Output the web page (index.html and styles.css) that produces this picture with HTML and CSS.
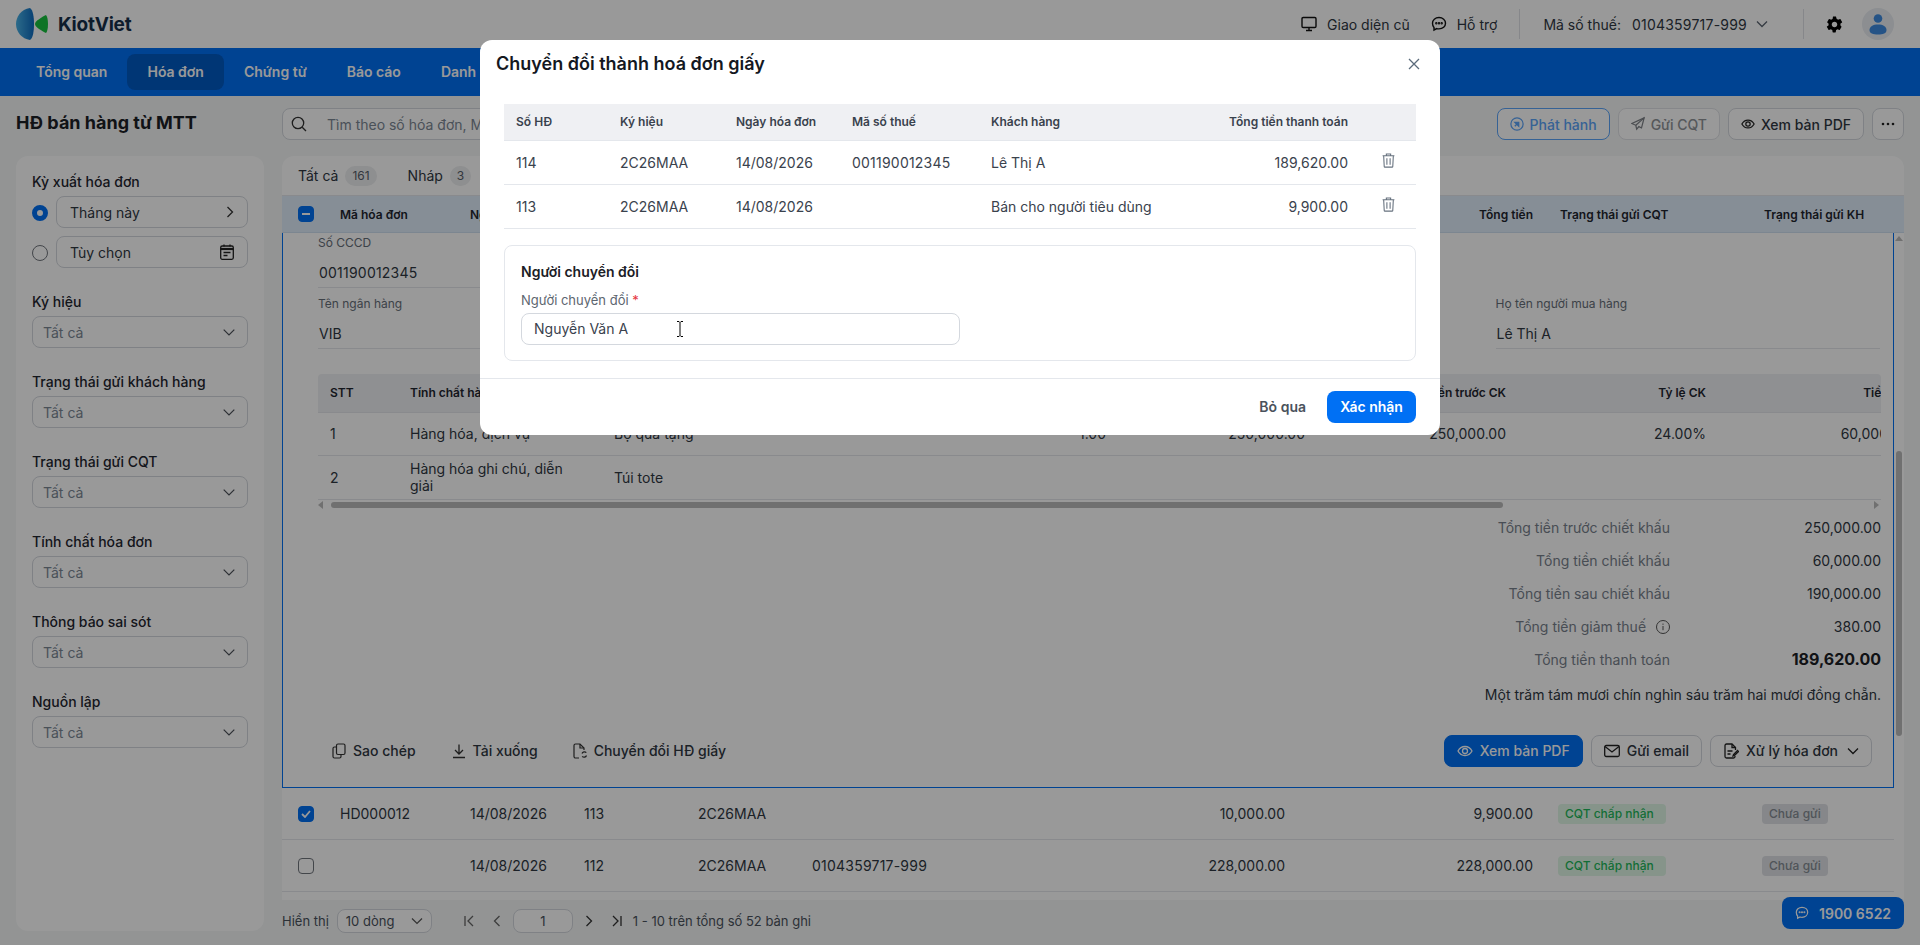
FILE: index.html
```html
<!DOCTYPE html>
<html lang="vi">
<head>
    <meta charset="UTF-8">
    <title>KiotViet - HĐ bán hàng từ MTT</title>
    <link rel="stylesheet" href="styles.css">
</head>
<body>
    <header class="topbar">
        <div class="logo">
            <svg width="32" height="32" viewBox="16 8 32 32">
                <defs>
                    <linearGradient id="lg" x1="0" x2="1" y1="0" y2="0">
                        <stop offset="0" stop-color="#4ab2e6"/>
                        <stop offset="1" stop-color="#0e6cc0"/>
                    </linearGradient>
                </defs>
                <path d="M30 8C21 9 16 17 16 24c0 8 6 15 14 16 3-2 4-9 4-16s-1-14-4-16z" fill="url(#lg)"/>
                <path d="M48 24c0-5-1-8-2-9-4 2-11 6-11 9s7 7 11 9c1-1 2-4 2-9z" fill="#18c23f"/>
            </svg>
            <span class="logo-text">KiotViet</span>
        </div>
        <div class="top-right">
            <a class="top-link">
                <svg class="ic-16" viewBox="0 0 16 16" fill="none" stroke="#111" stroke-width="1.4"><rect x="1" y="1.5" width="14" height="10" rx="1.2"/><path d="M5 14.5h6M8 12v2"/></svg>
                Giao diện cũ
            </a>
            <a class="top-link gap-l">
                <svg class="ic-16" viewBox="0 0 16 16" fill="none" stroke="#111" stroke-width="1.4"><path d="M8 1.5c3.8 0 6.5 2.5 6.5 5.7s-2.7 5.7-6.5 5.7c-.8 0-1.5-.1-2.2-.3L3 14v-2.6C2 10.4 1.5 8.9 1.5 7.2 1.5 4 4.2 1.5 8 1.5z"/><circle cx="5.3" cy="7.2" r=".5"/><circle cx="8" cy="7.2" r=".5"/><circle cx="10.7" cy="7.2" r=".5"/></svg>
                Hỗ trợ
            </a>
            <span class="top-sep sep-a"></span>
            <span class="tax-label">Mã số thuế:</span>
            <span class="tax-value digits">0104359717-999</span>
            <svg class="tax-chev" width="12" height="8" viewBox="0 0 12 8" fill="none" stroke="#5b6470" stroke-width="1.3"><path d="M1 1.5l5 5 5-5"/></svg>
            <span class="top-sep sep-b"></span>
            <svg class="gear" width="19" height="19" viewBox="0 0 24 24" fill="#000"><path d="M19.4 13c.1-.3.1-.7.1-1s0-.7-.1-1l2.1-1.6c.2-.2.2-.4.1-.6l-2-3.5c-.1-.2-.4-.3-.6-.2l-2.5 1c-.5-.4-1.1-.7-1.7-1L14 2.4c0-.2-.2-.4-.5-.4h-3c-.3 0-.5.2-.5.4l-.4 2.7c-.6.2-1.2.6-1.7 1l-2.5-1c-.2-.1-.5 0-.6.2l-2 3.5c-.1.2-.1.4.1.6L4.6 11c0 .3-.1.7-.1 1s0 .7.1 1l-2.1 1.600c-.2.2-.2.4-.1.6l2 3.500c.1.2.4.3.6.2l2.500-1c.5.4 1.100.7 1.700 1l.4 2.700c0 .2.2.4.5.4h3c.3 0 .5-.2.5-.4l.4-2.700c.6-.2 1.200-.6 1.700-1l2.500 1c.2.1.5 0 .6-.2l2-3.500c.1-.2.1-.4-.1-.6L19.400 13zM12 15.500c-1.900 0-3.500-1.600-3.500-3.500s1.600-3.500 3.500-3.500 3.500 1.600 3.500 3.500-1.600 3.500-3.500 3.500z"/></svg>
            <span class="avatar">
                <svg width="20" height="22" viewBox="0 0 20 22" fill="#3f8be0"><circle cx="10" cy="5.500" r="4.300"/><path d="M1.500 17c0-3.500 3.500-5.500 8.500-5.500s8.500 2 8.500 5.500-3.500 4.500-8.500 4.500S1.500 20.500 1.500 17z"/></svg>
            </span>
        </div>
    </header>

    <nav class="navbar">
        <a class="nav-item">Tổng quan</a>
        <a class="nav-item active">Hóa đơn</a>
        <a class="nav-item">Chứng từ</a>
        <a class="nav-item">Báo cáo</a>
        <a class="nav-item">Danh mục</a>
    </nav>

    <main class="page">
        <div class="toolbar">
            <h1 class="page-title">HĐ bán hàng từ MTT</h1>
            <div class="search">
                <svg class="ic-16" viewBox="0 0 16 16" fill="none" stroke="#333" stroke-width="1.3"><circle cx="7" cy="7" r="5.7"/><path d="M11.2 11.2L15 15"/></svg>
                <span>Tìm theo số hóa đơn, Mã hóa đơn, Mã số thuế, Khách hàng</span>
            </div>
            <div class="tool-btns">
                <button class="btn btn-outline-primary">
                    <svg class="ic-14" viewBox="0 0 16 16" fill="none" stroke="#5aa3f8" stroke-width="1.4"><circle cx="8" cy="8" r="7"/><path d="M5.5 6H10v4.500z" fill="#5aa3f8"/><path d="M5.5 10.500L9 7" stroke-width="1.6"/></svg>
                    Phát hành
                </button>
                <button class="btn btn-disabled">
                    <svg class="ic-14" viewBox="0 0 16 16" fill="none" stroke="#7d8187" stroke-width="1.4"><path d="M15 1L1 7.500l4.500 2 1 4.500 2.500-3 3 1.500z"/><path d="M15 1L5.500 9.500"/></svg>
                    Gửi CQT
                </button>
                <button class="btn">
                    <svg class="ic-14" viewBox="0 0 16 16" fill="none" stroke="#222" stroke-width="1.4"><path d="M1 8c1.600-3 4-4.500 7-4.500S13.400 5 15 8c-1.600 3-4 4.500-7 4.500S2.600 11 1 8z"/><circle cx="8" cy="8" r="2.500"/></svg>
                    Xem bản PDF
                </button>
                <button class="btn btn-more">
                    <svg width="14" height="4" viewBox="0 0 14 4" fill="#222"><circle cx="2" cy="2" r="1.3"/><circle cx="7" cy="2" r="1.3"/><circle cx="12" cy="2" r="1.3"/></svg>
                </button>
            </div>
        </div>

        <div class="content">
            <aside class="sidebar">
                <div class="side-title">Kỳ xuất hóa đơn</div>
                <div class="period-row">
                    <span class="radio checked"></span>
                    <div class="field">
                        <span>Tháng này</span>
                        <svg width="8" height="12" viewBox="0 0 8 12" fill="none" stroke="#333" stroke-width="1.3"><path d="M1.500 1l5 5-5 5"/></svg>
                    </div>
                </div>
                <div class="period-row">
                    <span class="radio"></span>
                    <div class="field">
                        <span>Tùy chọn</span>
                        <svg width="14" height="16" viewBox="0 0 14 16" fill="none" stroke="#222" stroke-width="1.3"><rect x=".7" y="2" width="12.6" height="13.3" rx="1.5"/><path d="M.7 5h12.6" stroke-width="2.2"/><path d="M3.500 8.500h7M3.500 11.500h4M4 .5v2M10 .5v2"/></svg>
                    </div>
                </div>
                <div class="side-group">
                    <div class="side-label">Ký hiệu</div>
                    <div class="select"><span>Tất cả</span><svg class="chev" viewBox="0 0 12 7"><path d="M.7.7L6 6l5.3-5.3"/></svg></div>
                </div>
                <div class="side-group">
                    <div class="side-label">Trạng thái gửi khách hàng</div>
                    <div class="select"><span>Tất cả</span><svg class="chev" viewBox="0 0 12 7"><path d="M.7.7L6 6l5.3-5.3"/></svg></div>
                </div>
                <div class="side-group">
                    <div class="side-label">Trạng thái gửi CQT</div>
                    <div class="select"><span>Tất cả</span><svg class="chev" viewBox="0 0 12 7"><path d="M.7.7L6 6l5.3-5.3"/></svg></div>
                </div>
                <div class="side-group">
                    <div class="side-label">Tính chất hóa đơn</div>
                    <div class="select"><span>Tất cả</span><svg class="chev" viewBox="0 0 12 7"><path d="M.7.7L6 6l5.3-5.3"/></svg></div>
                </div>
                <div class="side-group">
                    <div class="side-label">Thông báo sai sót</div>
                    <div class="select"><span>Tất cả</span><svg class="chev" viewBox="0 0 12 7"><path d="M.7.7L6 6l5.3-5.3"/></svg></div>
                </div>
                <div class="side-group">
                    <div class="side-label">Nguồn lập</div>
                    <div class="select"><span>Tất cả</span><svg class="chev" viewBox="0 0 12 7"><path d="M.7.7L6 6l5.3-5.3"/></svg></div>
                </div>
            </aside>

            <section class="right-col">
                <div class="list-card">
                    <div class="tabs">
                        <span class="tab">Tất cả <b class="count">161</b></span>
                        <span class="tab">Nháp <b class="count">3</b></span>
                    </div>
                    <div class="list-row list-head">
                        <span class="cell-check"><span class="check partial"></span></span>
                        <span>Mã hóa đơn</span>
                        <span>Ngày hóa đơn</span>
                        <span>Số HĐ</span>
                        <span>Ký hiệu</span>
                        <span>Mã số thuế</span>
                        <span class="num">Tổng tiền hàng</span>
                        <span class="num">Tổng tiền</span>
                        <span class="cell-cqt">Trạng thái gửi CQT</span>
                        <span>Trạng thái gửi KH</span>
                    </div>
                    <div class="list-body">
                        <div class="list-scroll">
                            <div class="detail">
                                <div class="field-grid">
                                    <div class="info">
                                        <label>Số CCCD</label>
                                        <div class="info-val digits">001190012345</div>
                                    </div>
                                </div>
                                <div class="field-grid second">
                                    <div class="info">
                                        <label>Tên ngân hàng</label>
                                        <div class="info-val">VIB</div>
                                    </div>
                                    <div class="info buyer">
                                        <label>Họ tên người mua hàng</label>
                                        <div class="info-val">Lê Thị A</div>
                                    </div>
                                </div>

                                <div class="items-wrap">
                                    <table class="items">
                                        <colgroup>
                                            <col class="i-stt"><col class="i-kind"><col class="i-name"><col class="i-qty">
                                            <col class="i-price"><col class="i-before"><col class="i-rate"><col class="i-disc">
                                        </colgroup>
                                        <thead>
                                            <tr>
                                                <th>STT</th><th>Tính chất hàng hóa</th><th>Tên hàng hóa</th><th class="num">Số lượng</th>
                                                <th class="num">Đơn giá</th><th class="num">Tiền trước CK</th><th class="num">Tỷ lệ CK</th><th class="num">Tiền CK</th>
                                            </tr>
                                        </thead>
                                        <tbody>
                                            <tr>
                                                <td>1</td><td>Hàng hóa, dịch vụ</td><td>Bộ quà tặng</td><td class="num">1.00</td>
                                                <td class="num">250,000.00</td><td class="num">250,000.00</td><td class="num">24.00%</td><td class="num">60,000.00</td>
                                            </tr>
                                            <tr>
                                                <td>2</td><td>Hàng hóa ghi chú, diễn giải</td><td>Túi tote</td><td></td><td></td><td></td><td></td><td></td>
                                            </tr>
                                        </tbody>
                                    </table>
                                </div>
                                <div class="hbar">
                                    <span class="arrow-l"></span>
                                    <span class="hbar-thumb"></span>
                                    <span class="arrow-r"></span>
                                </div>

                                <div class="sum-row"><span class="sum-label">Tổng tiền trước chiết khấu</span><span class="sum-val">250,000.00</span></div>
                                <div class="sum-row"><span class="sum-label">Tổng tiền chiết khấu</span><span class="sum-val">60,000.00</span></div>
                                <div class="sum-row"><span class="sum-label">Tổng tiền sau chiết khấu</span><span class="sum-val">190,000.00</span></div>
                                <div class="sum-row">
                                    <span class="sum-label">Tổng tiền giảm thuế
                                        <svg class="ic-info" viewBox="0 0 14 14" fill="none" stroke="#555" stroke-width="1"><circle cx="7" cy="7" r="6.5"/><path d="M7 6v4.200M7 3.600v1.200"/></svg>
                                    </span>
                                    <span class="sum-val">380.00</span>
                                </div>
                                <div class="sum-row"><span class="sum-label">Tổng tiền thanh toán</span><span class="sum-val total">189,620.00</span></div>
                                <div class="in-words">Một trăm tám mươi chín nghìn sáu trăm hai mươi đồng chẵn.</div>

                                <div class="actions">
                                    <div class="act-left">
                                        <a class="act-link">
                                            <svg class="ic-14" viewBox="0 0 14 16" fill="none" stroke="#333" stroke-width="1.2"><rect x="4.500" y="1" width="8.500" height="10.500" rx="1.500"/><path d="M4.500 4h-2C1.700 4 1 4.700 1 5.500v8c0 .8.700 1.500 1.500 1.500h5c.8 0 1.500-.7 1.500-1.500v-2"/></svg>
                                            Sao chép
                                        </a>
                                        <a class="act-link">
                                            <svg class="ic-14" viewBox="0 0 14 16" fill="none" stroke="#333" stroke-width="1.3"><path d="M7 1.500v9M3 7l4 4 4-4M1 14.500h12"/></svg>
                                            Tải xuống
                                        </a>
                                        <a class="act-link conv">
                                            <svg class="ic-16" viewBox="0 0 16 16" fill="none" stroke="#333" stroke-width="1.2"><path d="M7 15H3.500C2.700 15 2 14.300 2 13.500v-11C2 1.700 2.700 1 3.500 1H8l4 4v2"/><path d="M8 1v4h4"/><path d="M10 10.500a2.500 2.500 0 0 1 4.300-.8M14.500 12.500a2.500 2.500 0 0 1-4.300.8"/></svg>
                                            Chuyển đổi HĐ giấy
                                        </a>
                                    </div>
                                    <div class="act-right">
                                        <button class="btn btn-primary">
                                            <svg class="ic-16" viewBox="0 0 16 16" fill="none" stroke="#fff" stroke-width="1.3"><path d="M1 8c1.600-3 4-4.500 7-4.500S13.400 5 15 8c-1.600 3-4 4.500-7 4.500S2.600 11 1 8z"/><circle cx="8" cy="8" r="2.500"/></svg>
                                            Xem bản PDF
                                        </button>
                                        <button class="btn">
                                            <svg class="ic-16" viewBox="0 0 16 16" fill="none" stroke="#222" stroke-width="1.3"><rect x=".7" y="2.500" width="14.600" height="11" rx="1.500"/><path d="M1 3.500l7 5.500 7-5.500"/></svg>
                                            Gửi email
                                        </button>
                                        <button class="btn">
                                            <svg class="ic-16" viewBox="0 0 16 16" fill="none" stroke="#222" stroke-width="1.3"><path d="M12.500 7V4.500L9 1H3.500C2.700 1 2 1.700 2 2.500v11c0 .8.700 1.500 1.500 1.500h7c.8 0 1.500-.7 1.500-1.500V13"/><path d="M4.500 8h5M4.500 11h3M9 1v3.500h3.500"/><path d="M15 7l-4.500 4.500-.5 1.500 1.500-.5L16 8"/></svg>
                                            Xử lý hóa đơn
                                            <svg class="btn-chev" width="12" height="8" viewBox="0 0 12 8" fill="none" stroke="#222" stroke-width="1.3"><path d="M1 1.500l5 5 5-5"/></svg>
                                        </button>
                                    </div>
                                </div>
                            </div>

                            <div class="list-row">
                                <span class="cell-check"><span class="check on"><svg width="10" height="8" viewBox="0 0 10 8" fill="none" stroke="#fff" stroke-width="1.8"><path d="M1 4l3 3 5-6"/></svg></span></span>
                                <span>HD000012</span><span>14/08/2026</span><span>113</span><span>2C26MAA</span><span></span>
                                <span class="num">10,000.00</span><span class="num">9,900.00</span>
                                <span class="cell-cqt"><i class="badge green">CQT chấp nhận</i></span><span><i class="badge gray">Chưa gửi</i></span>
                            </div>
                            <div class="list-row">
                                <span class="cell-check"><span class="check"></span></span>
                                <span></span><span>14/08/2026</span><span>112</span><span>2C26MAA</span><span class="digits">0104359717-999</span>
                                <span class="num">228,000.00</span><span class="num">228,000.00</span>
                                <span class="cell-cqt"><i class="badge green">CQT chấp nhận</i></span><span><i class="badge gray">Chưa gửi</i></span>
                            </div>
                        </div>
                        <div class="vbar">
                            <span class="arrow-u"></span>
                            <span class="vbar-thumb"></span>
                        </div>
                    </div>
                </div>

                <div class="pager">
                    <span>Hiển thị</span>
                    <div class="page-size">10 dòng <svg width="12" height="8" viewBox="0 0 12 8" fill="none" stroke="#555" stroke-width="1.2"><path d="M1 1.500l5 5 5-5"/></svg></div>
                    <div class="page-btns">
                        <svg width="12" height="12" viewBox="0 0 12 12" fill="none" stroke="#666" stroke-width="1.3"><path d="M2 1v10M10 1L5 6l5 5"/></svg>
                        <svg width="12" height="12" viewBox="0 0 12 12" fill="none" stroke="#666" stroke-width="1.3"><path d="M8.500 1l-5 5 5 5"/></svg>
                        <span class="page-input">1</span>
                        <svg width="12" height="12" viewBox="0 0 12 12" fill="none" stroke="#333" stroke-width="1.3"><path d="M3.500 1l5 5-5 5"/></svg>
                        <svg width="12" height="12" viewBox="0 0 12 12" fill="none" stroke="#333" stroke-width="1.3"><path d="M2 1l5 5-5 5M10 1v10"/></svg>
                    </div>
                    <span>1 - 10 trên tổng số 52 bản ghi</span>
                </div>
            </section>
        </div>
    </main>

    <div class="overlay">
        <div class="modal">
            <div class="modal-head">
                <h2>Chuyển đổi thành hoá đơn giấy</h2>
                <svg width="12" height="12" viewBox="0 0 12 12" fill="none" stroke="#5b6b7b" stroke-width="1.3"><path d="M1 1l10 10M11 1L1 11"/></svg>
            </div>
            <table class="convert">
                <colgroup>
                    <col class="c-no"><col class="c-sym"><col class="c-date"><col class="c-tax"><col class="c-cust"><col class="c-total"><col class="c-del">
                </colgroup>
                <thead>
                    <tr><th>Số HĐ</th><th>Ký hiệu</th><th>Ngày hóa đơn</th><th>Mã số thuế</th><th>Khách hàng</th><th class="num">Tổng tiền thanh toán</th><th></th></tr>
                </thead>
                <tbody>
                    <tr>
                        <td>114</td><td>2C26MAA</td><td>14/08/2026</td><td class="digits">001190012345</td><td>Lê Thị A</td><td class="num">189,620.00</td>
                        <td class="del"><svg width="13" height="15" viewBox="0 0 12 14" fill="none" stroke="#66717e" stroke-width="1"><path d="M.5 2.500h11M4 2.500V1h4v1.500M1.500 2.500l.5 10c0 .4.300.7.700.7h6.600c.4 0 .7-.3.7-.7l.5-10M4.500 5v6M7.500 5v6"/></svg></td>
                    </tr>
                    <tr>
                        <td>113</td><td>2C26MAA</td><td>14/08/2026</td><td></td><td>Bán cho người tiêu dùng</td><td class="num">9,900.00</td>
                        <td class="del"><svg width="13" height="15" viewBox="0 0 12 14" fill="none" stroke="#66717e" stroke-width="1"><path d="M.5 2.500h11M4 2.500V1h4v1.500M1.500 2.500l.5 10c0 .4.300.7.700.7h6.600c.4 0 .7-.3.7-.7l.5-10M4.500 5v6M7.500 5v6"/></svg></td>
                    </tr>
                </tbody>
            </table>
            <div class="person-card">
                <div class="person-title">Người chuyển đổi</div>
                <div class="person-label">Người chuyển đổi <em>*</em></div>
                <div class="person-input">
                    Nguyễn Văn A
                    <svg class="ibeam" width="8" height="16" viewBox="0 0 8 16" fill="none" stroke="#000" stroke-width="1"><path d="M1 .5h2l1 1 1-1h2M4 1.500v13M1 15.500h2l1-1 1 1h2"/></svg>
                </div>
            </div>
            <div class="modal-foot">
                <button class="btn-skip">Bỏ qua</button>
                <button class="btn-confirm">Xác nhận</button>
            </div>
        </div>
    </div>

    <a class="hotline">
        <svg class="ic-14" viewBox="0 0 16 16" fill="none" stroke="#fff" stroke-width="1.4"><path d="M8 1.500c3.800 0 6.500 2.500 6.500 5.700s-2.700 5.700-6.500 5.700c-.8 0-1.500-.1-2.200-.3L3 14v-2.600C2 10.400 1.500 8.900 1.500 7.200 1.500 4 4.200 1.500 8 1.500z"/><circle cx="5.300" cy="7.200" r=".5"/><circle cx="8" cy="7.200" r=".5"/><circle cx="10.700" cy="7.200" r=".5"/></svg>
        1900 6522
    </a>
</body>
</html>
```

FILE: styles.css
```css
* {
    box-sizing: border-box;
}

:root {
    --primary-color: #0070f4;
    --text-color: #2f3742;
    --muted-color: #7c8794;
    --line-color: #e4e7ec;
    --field-border: #d4d8de;
}

html, body {
    margin: 0;
    height: 100%;
    overflow: hidden;
    background-color: #f5f7f7;
    color: var(--text-color);
    font-family: Inter, "Noto Sans", sans-serif;
    font-size: 14px;
}

body {
    display: flex;
    flex-direction: column;
}

button {
    font-family: inherit;
}

.num {
    text-align: right;
}

.digits {
    letter-spacing: .22px;
}

.ic-16 {
    width: 16px;
    height: 16px;
    flex: none;
}

.ic-14 {
    width: 14px;
    height: 16px;
    flex: none;
}

.ic-info {
    width: 14px;
    height: 14px;
    margin-left: 6px;
    vertical-align: -2px;
}

/* top bar */
.topbar {
    height: 48px;
    flex: none;
    display: flex;
    align-items: center;
    justify-content: space-between;
    padding: 0 26px 0 16px;
    background-color: #fff;
}

.logo {
    display: flex;
    align-items: center;
    gap: 10px;
}

.logo-text {
    font-size: 19px;
    font-weight: 700;
    color: #17304a;
    letter-spacing: -.2px;
}

.top-right {
    display: flex;
    align-items: center;
}

.top-link {
    display: flex;
    align-items: center;
    gap: 10px;
}

.gap-l {
    margin-left: 21px;
}

.top-sep {
    width: 1px;
    height: 30px;
    background-color: #e0e2e6;
}

.sep-a {
    margin: 0 23px 0 22px;
}

.sep-b {
    margin: 0 21px 0 35px;
}

.tax-value {
    margin-left: 11px;
}

.tax-chev {
    margin-left: 9px;
}

.gear {
    margin-right: 18px;
}

.avatar {
    width: 32px;
    height: 32px;
    border-radius: 50%;
    background-color: #e9edf2;
    display: flex;
    align-items: center;
    justify-content: center;
}

/* nav */
.navbar {
    height: 48px;
    flex: none;
    display: flex;
    align-items: center;
    padding-left: 16px;
    background-color: var(--primary-color);
}

.nav-item {
    height: 36px;
    line-height: 36px;
    padding: 0 20px;
    border-radius: 8px;
    color: #fff;
    font-weight: 600;
}

.nav-item.active {
    background-color: #005ac4;
}

/* page */
.page {
    flex: 1;
    min-height: 0;
    padding: 12px 16px 0;
}

.toolbar {
    display: flex;
    align-items: center;
    height: 32px;
    margin-bottom: 16px;
}

.page-title {
    width: 266px;
    margin: -4px 0 0;
    flex: none;
    font-size: 18px;
    font-weight: 700;
    color: #1c2026;
}

.search {
    width: 1120px;
    height: 32px;
    flex: none;
    margin-right: auto;
    display: flex;
    align-items: center;
    gap: 20px;
    padding-left: 8px;
    border: 1px solid var(--field-border);
    border-radius: 8px;
    background-color: #fff;
    color: var(--muted-color);
    overflow: hidden;
    white-space: nowrap;
}

.tool-btns {
    display: flex;
    gap: 8px;
}

.tool-btns .btn {
    gap: 6px;
}

.btn {
    height: 32px;
    display: inline-flex;
    align-items: center;
    gap: 7px;
    padding: 0 12px;
    border: 1px solid var(--field-border);
    border-radius: 8px;
    background-color: #fff;
    color: var(--text-color);
    font-size: 14px;
    font-weight: 500;
    white-space: nowrap;
}

.btn-outline-primary {
    border-color: #5aa3f8;
    color: #5aa3f8;
}

.btn-disabled {
    color: #8f9398;
    border-color: #e0e2e6;
}

.tool-btns .btn-more {
    width: 32px;
    padding: 0;
    justify-content: center;
}

.btn-primary {
    background-color: var(--primary-color);
    border-color: var(--primary-color);
    color: #fff;
}

.btn-chev {
    margin-left: 2px;
}

.content {
    display: grid;
    grid-template-columns: 248px 1fr;
    column-gap: 18px;
}

/* sidebar */
.sidebar {
    height: 775px;
    padding: 16px;
    border-radius: 12px;
    background-color: #fff;
}

.side-title,
.side-label {
    height: 24px;
    line-height: 20px;
    font-weight: 500;
    color: #1f2630;
}

.period-row {
    display: flex;
    align-items: center;
    gap: 8px;
    margin-bottom: 8px;
}

.radio {
    width: 16px;
    height: 16px;
    margin-top: 1px;
    border: 1px solid #70757c;
    border-radius: 50%;
    background-color: #fff;
    flex: none;
}

.radio.checked {
    border: 5px solid var(--primary-color);
}

.field,
.select {
    height: 32px;
    display: flex;
    align-items: center;
    justify-content: space-between;
    border: 1px solid var(--field-border);
    border-radius: 8px;
}

.field {
    flex: 1;
    padding: 0 13px;
}

.select {
    padding: 0 12px 0 10px;
    color: var(--muted-color);
}

.chev {
    width: 12px;
    height: 7px;
    fill: none;
    stroke: #4a5058;
    stroke-width: 1.2;
}

.side-group {
    height: 56px;
    margin-bottom: 24px;
}

.period-row + .side-group {
    margin-top: 24px;
}

/* list */
.right-col {
    min-width: 0;
}

.list-card {
    height: 744px;
    display: flex;
    flex-direction: column;
    overflow: hidden;
    border-radius: 12px 12px 0 0;
    background-color: #fff;
}

.tabs {
    height: 40px;
    flex: none;
    display: flex;
    align-items: center;
    gap: 31px;
    padding-left: 16px;
    border-bottom: 1px solid var(--line-color);
}

.tab {
    display: flex;
    align-items: center;
    gap: 7px;
}

.count {
    min-width: 20px;
    height: 20px;
    padding: 0 7px;
    border-radius: 10px;
    background-color: #edeef0;
    color: #555d68;
    font-size: 12px;
    font-weight: 400;
    line-height: 20px;
    text-align: center;
}

.list-row {
    height: 52px;
    display: grid;
    grid-template-columns: 58px 130px 114px 114px 114px 200px 273px 248px 229px 1fr;
    align-items: center;
    border-bottom: 1px solid var(--line-color);
}

.list-head {
    height: 37px;
    flex: none;
    background-color: #dfedfa;
    border-bottom: 1px solid #cfdff0;
    font-size: 12px;
    font-weight: 600;
    color: #1f2630;
    white-space: nowrap;
}

.list-head > span:last-child {
    padding-left: 2px;
}

.list-head > .cell-cqt {
    padding-left: 27px;
}

.cell-check {
    padding-left: 16px;
}

.cell-cqt {
    padding-left: 25px;
}

.check {
    width: 16px;
    height: 16px;
    display: flex;
    align-items: center;
    justify-content: center;
    border: 1px solid #70757c;
    border-radius: 4px;
    background-color: #fff;
}

.check.on,
.check.partial {
    background-color: var(--primary-color);
    border-color: var(--primary-color);
}

.check.partial::after {
    content: "";
    width: 8px;
    height: 2px;
    background-color: #fff;
}

.list-body {
    flex: 1;
    min-height: 0;
    display: flex;
}

.list-scroll {
    width: 1612px;
    flex: none;
    overflow: hidden;
}

.vbar {
    flex: 1;
    display: flex;
    flex-direction: column;
    align-items: center;
    padding-top: 3px;
}

.vbar-thumb {
    width: 6px;
    height: 285px;
    margin-top: 210px;
    border-radius: 3px;
    background-color: #bbb;
}

.arrow-u {
    border: 4px solid transparent;
    border-top: 0;
    border-bottom: 5px solid #bbb;
}

.detail {
    height: 555px;
    padding: 2px 12px 20px 35px;
    border: 1px solid var(--primary-color);
    border-top: 0;
}

.field-grid {
    display: grid;
    grid-template-columns: repeat(4, 384.5px);
    column-gap: 8px;
}

.field-grid.second {
    margin-top: 8px;
}

.buyer {
    grid-column: 4;
}

.info label {
    display: block;
    height: 16px;
    line-height: 16px;
    font-size: 12px;
    color: #666e78;
}

.info-val {
    height: 37px;
    line-height: 44px;
    padding-left: 1px;
    border-bottom: 1px solid var(--line-color);
}

.items-wrap {
    margin-top: 25px;
    overflow: hidden;
    border-radius: 4px 4px 0 0;
}

.items {
    width: 1603px;
    table-layout: fixed;
    border-collapse: collapse;
}

.i-stt { width: 80px; }
.i-kind { width: 204px; }
.i-name { width: 316px; }
.i-qty { width: 200px; }
.i-price { width: 199px; }
.i-before { width: 201px; }
.i-rate { width: 200px; }
.i-disc { width: 203px; }

.items th {
    height: 38px;
    padding: 0 12px;
    background-color: #eff0f3;
    border-bottom: 1px solid var(--line-color);
    font-size: 12px;
    font-weight: 600;
    color: #1f2630;
    text-align: left;
    white-space: nowrap;
}

.items th.num {
    text-align: right;
}

.items td {
    height: 43px;
    padding: 0 12px;
    line-height: 17px;
    border-bottom: 1px solid var(--line-color);
}

.items td:nth-child(2) {
    padding-right: 24px;
}

.items tr:last-child td {
    height: 44px;
}

.hbar {
    height: 11px;
    display: flex;
    align-items: center;
    padding-right: 2px;
}

.hbar-thumb {
    width: 1172px;
    height: 6px;
    margin-left: 8px;
    border-radius: 3px;
    background-color: #bbb;
}

.arrow-l {
    border: 4px solid transparent;
    border-left: 0;
    border-right: 5px solid #bbb;
}

.arrow-r {
    margin-left: auto;
    border: 4px solid transparent;
    border-right: 0;
    border-left: 5px solid #bbb;
}

.sum-row {
    height: 33px;
    display: flex;
    align-items: center;
    justify-content: flex-end;
}

.sum-label {
    color: #78818c;
}

.sum-val {
    width: 211px;
    text-align: right;
}

.sum-val.total {
    font-size: 16px;
    font-weight: 700;
    color: #1c2026;
}

.in-words {
    height: 20px;
    margin-top: 9px;
    line-height: 20px;
    text-align: right;
}

.actions {
    display: flex;
    justify-content: space-between;
    margin-top: 30px;
    padding: 0 9px 0 14px;
}

.act-left,
.act-right {
    display: flex;
    align-items: center;
}

.act-left {
    gap: 36px;
}

.act-right {
    gap: 8px;
}

.act-link {
    display: flex;
    align-items: center;
    gap: 7px;
    font-weight: 500;
}

.act-link.conv {
    gap: 6px;
    margin-left: -2px;
}

.badge {
    display: inline-block;
    height: 20px;
    padding: 0 7px;
    border-radius: 4px;
    font-size: 12px;
    font-style: normal;
    font-weight: 500;
    line-height: 20px;
}

.badge.green {
    padding-right: 12px;
    background-color: #e0f7e7;
    color: #1fb85a;
}

.badge.gray {
    background-color: #dfe2e6;
    color: #868c94;
}

/* pager */
.pager {
    height: 31px;
    margin-top: 5px;
    display: flex;
    align-items: center;
    font-size: 13px;
    color: #4a525c;
}

.page-size {
    width: 95px;
    height: 24px;
    margin-left: 8px;
    display: flex;
    align-items: center;
    justify-content: space-between;
    padding: 0 8px;
    border: 1px solid var(--field-border);
    border-radius: 8px;
    background-color: #fff;
}

.page-btns {
    display: flex;
    align-items: center;
    gap: 16px;
    margin: 0 10px 0 31px;
}

.page-input {
    width: 60px;
    height: 24px;
    margin: 0 -6px;
    line-height: 22px;
    text-align: center;
    border: 1px solid var(--field-border);
    border-radius: 8px;
    background-color: #fff;
}

.hotline {
    position: fixed;
    left: 1782px;
    top: 897px;
    width: 122px;
    height: 32px;
    display: flex;
    align-items: center;
    gap: 10px;
    padding-left: 13px;
    border-radius: 8px;
    background-color: var(--primary-color);
    color: #fff;
    font-weight: 600;
    z-index: 5;
}

/* modal */
.overlay {
    position: fixed;
    top: 0;
    left: 0;
    right: 0;
    bottom: 0;
    z-index: 10;
    display: flex;
    justify-content: center;
    align-items: flex-start;
    padding-top: 40px;
    background-color: rgba(0, 0, 0, .4);
}

.modal {
    width: 960px;
    height: 395px;
    border-radius: 12px;
    background-color: #fff;
}

.modal-head {
    height: 64px;
    display: flex;
    align-items: center;
    justify-content: space-between;
    padding: 0 20px 17px 16px;
}

.modal-head h2 {
    margin: 0;
    font-size: 18px;
    font-weight: 600;
    color: #14181f;
}

.convert {
    width: 912px;
    margin-left: 24px;
    table-layout: fixed;
    border-collapse: collapse;
}

.c-no { width: 104px; }
.c-sym { width: 116px; }
.c-date { width: 116px; }
.c-tax { width: 139px; }
.c-cust { width: 181px; }
.c-total { width: 200px; }
.c-del { width: 56px; }

.convert th {
    height: 36px;
    padding: 0 12px;
    background-color: #eff0f3;
    border-bottom: 1px solid var(--line-color);
    font-size: 12px;
    font-weight: 600;
    color: #3a424d;
    text-align: left;
}

.convert th.num {
    text-align: right;
}

.convert td {
    height: 44px;
    padding: 0 12px;
    border-bottom: 1px solid var(--line-color);
    color: #3a424d;
    white-space: nowrap;
}

.convert td.del {
    padding: 0 0 0 22px;
}

.person-card {
    height: 116px;
    margin: 16px 24px 0;
    padding: 16px 16px 0;
    border: 1px solid var(--line-color);
    border-radius: 8px;
}

.person-title {
    height: 20px;
    line-height: 20px;
    font-size: 14px;
    font-weight: 600;
    color: #1c2026;
}

.person-label {
    height: 20px;
    margin-top: 8px;
    line-height: 20px;
    font-size: 13px;
    color: #5d6670;
}

.person-label em {
    color: #e5343d;
    font-style: normal;
}

.person-input {
    position: relative;
    width: 439px;
    height: 32px;
    margin-top: 3px;
    padding-left: 12px;
    line-height: 30px;
    border: 1px solid var(--field-border);
    border-radius: 8px;
    color: #3a424d;
}

.ibeam {
    position: absolute;
    left: 154px;
    top: 7px;
}

.modal-foot {
    height: 57px;
    margin-top: 17px;
    display: flex;
    align-items: center;
    justify-content: flex-end;
    gap: 21px;
    padding-right: 24px;
    border-top: 1px solid var(--line-color);
}

.btn-skip {
    padding: 0;
    border: 0;
    background: none;
    color: #4a525c;
    font-size: 14px;
    font-weight: 600;
}

.btn-confirm {
    width: 89px;
    height: 32px;
    border: 0;
    border-radius: 8px;
    background-color: var(--primary-color);
    color: #fff;
    font-size: 14px;
    font-weight: 600;
}
```
